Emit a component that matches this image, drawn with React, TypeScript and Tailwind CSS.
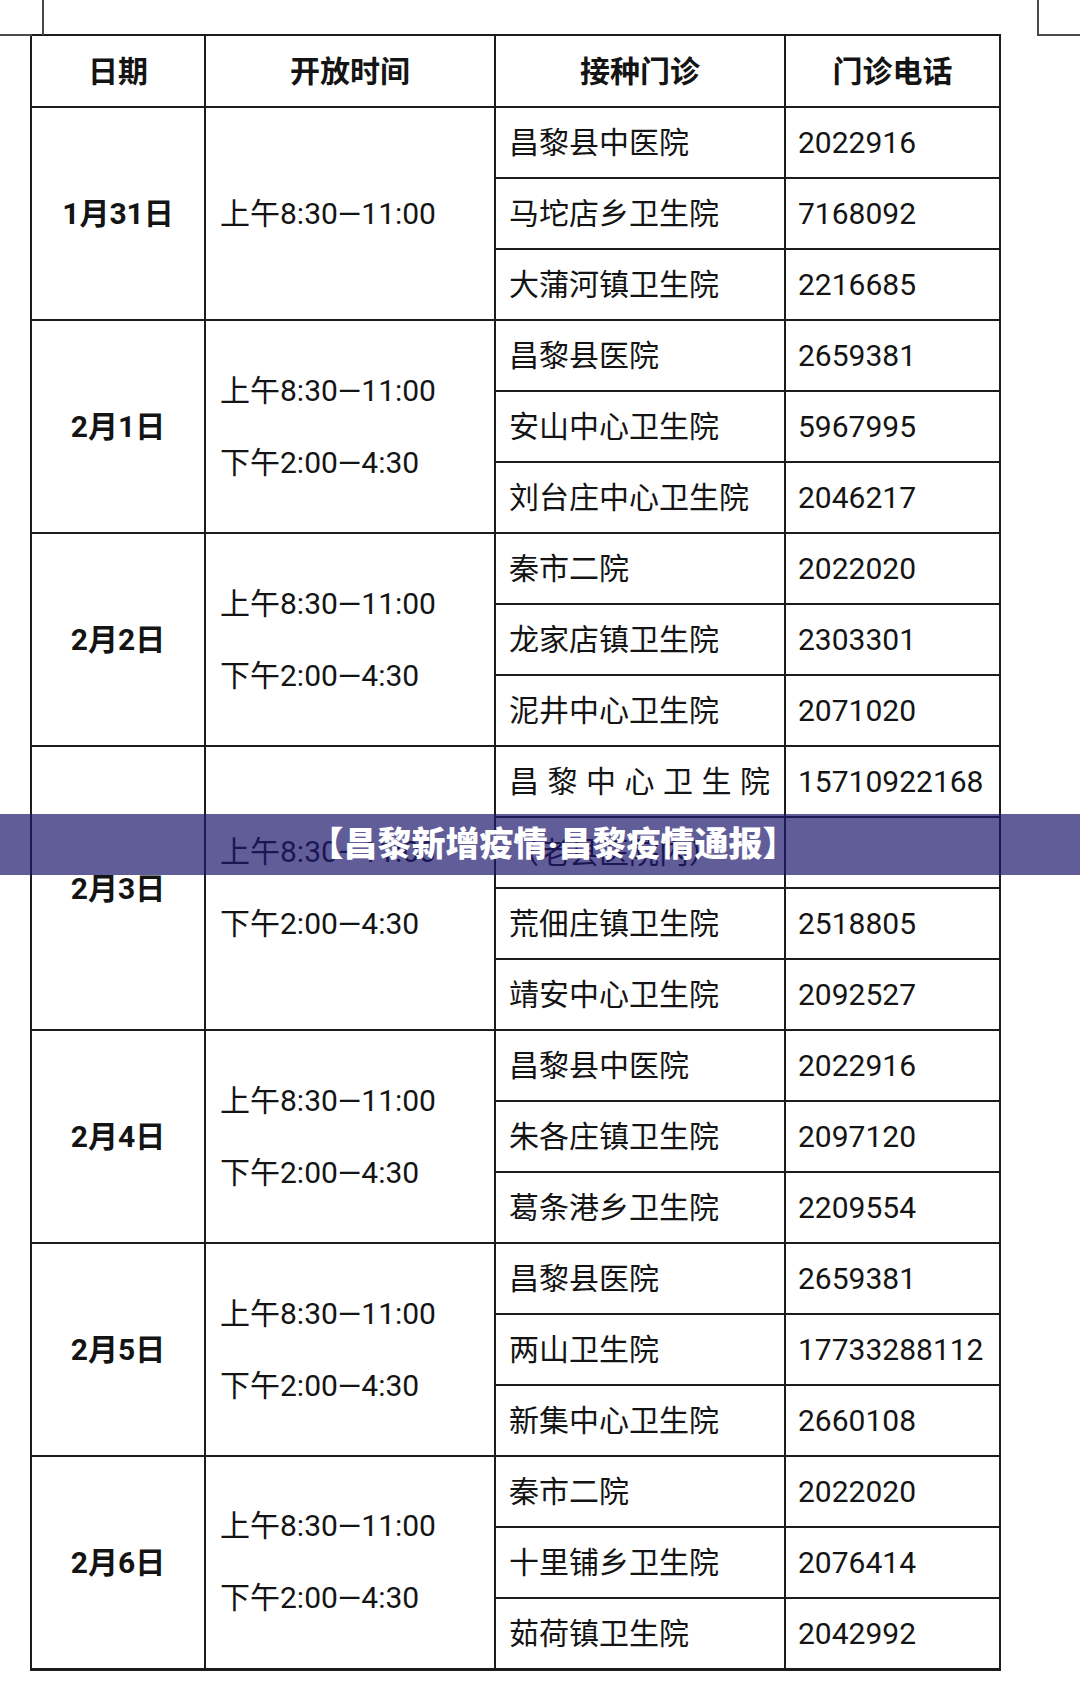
import React from "react";

type Group = {
  date: string;
  times: string[];
  rows: [string, string, boolean?][];
};

const groups: Group[] = [
  {
    date: "1月31日",
    times: ["上午8:30—11:00"],
    rows: [
      ["昌黎县中医院", "2022916"],
      ["马坨店乡卫生院", "7168092"],
      ["大蒲河镇卫生院", "2216685"],
    ],
  },
  {
    date: "2月1日",
    times: ["上午8:30—11:00", "下午2:00—4:30"],
    rows: [
      ["昌黎县医院", "2659381"],
      ["安山中心卫生院", "5967995"],
      ["刘台庄中心卫生院", "2046217"],
    ],
  },
  {
    date: "2月2日",
    times: ["上午8:30—11:00", "下午2:00—4:30"],
    rows: [
      ["秦市二院", "2022020"],
      ["龙家店镇卫生院", "2303301"],
      ["泥井中心卫生院", "2071020"],
    ],
  },
  {
    date: "2月3日",
    times: ["上午8:30—11:00", "下午2:00—4:30"],
    rows: [
      ["昌黎中心卫生院", "15710922168", true],
      ["（老县医院内）", ""],
      ["荒佃庄镇卫生院", "2518805"],
      ["靖安中心卫生院", "2092527"],
    ],
  },
  {
    date: "2月4日",
    times: ["上午8:30—11:00", "下午2:00—4:30"],
    rows: [
      ["昌黎县中医院", "2022916"],
      ["朱各庄镇卫生院", "2097120"],
      ["葛条港乡卫生院", "2209554"],
    ],
  },
  {
    date: "2月5日",
    times: ["上午8:30—11:00", "下午2:00—4:30"],
    rows: [
      ["昌黎县医院", "2659381"],
      ["两山卫生院", "17733288112"],
      ["新集中心卫生院", "2660108"],
    ],
  },
  {
    date: "2月6日",
    times: ["上午8:30—11:00", "下午2:00—4:30"],
    rows: [
      ["秦市二院", "2022020"],
      ["十里铺乡卫生院", "2076414"],
      ["茹荷镇卫生院", "2042992"],
    ],
  },
];

const cell = "border-2 border-[#1c1c1c]";

export default function App() {
  return (
    <div className="relative w-[1080px] h-[1691px] bg-white overflow-hidden font-['Roboto','Noto_Sans_CJK_SC',sans-serif] text-[#141414]">
      {/* page corner marks */}
      <div className="absolute left-[42px] top-0 w-[2px] h-[35px] bg-[#4a4a4a]" />
      <div className="absolute left-0 top-[34px] w-[32px] h-[2px] bg-[#4a4a4a]" />
      <div className="absolute left-[1037px] top-0 w-[2px] h-[36px] bg-[#4a4a4a]" />
      <div className="absolute left-[1037px] top-[34px] w-[43px] h-[2px] bg-[#4a4a4a]" />

      <div className="pt-[34px] pl-[30px]">
        <table className="table-fixed border-collapse w-[969px] border-b-[3px] border-[#1c1c1c]">
          <colgroup>
            <col className="w-[174px]" />
            <col className="w-[290px]" />
            <col className="w-[290px]" />
            <col className="w-[215px]" />
          </colgroup>
          <thead>
            <tr className="h-[72px]">
              <th className={`${cell} text-[30px] font-bold text-center`}>日期</th>
              <th className={`${cell} text-[30px] font-bold text-center`}>开放时间</th>
              <th className={`${cell} text-[30px] font-bold text-center`}>接种门诊</th>
              <th className={`${cell} text-[30px] font-bold text-center`}>门诊电话</th>
            </tr>
          </thead>
          <tbody>
            {groups.map((g) =>
              g.rows.map((r, i) => (
                <tr key={g.date + i} className="h-[71px]">
                  {i === 0 && (
                    <>
                      <td
                        rowSpan={g.rows.length}
                        className={`${cell} text-center text-[30px] font-bold align-middle`}
                      >
                        {g.date}
                      </td>
                      <td
                        rowSpan={g.rows.length}
                        className={`${cell} pl-[14px] text-[30px] align-middle`}
                      >
                        <div className="flex flex-col justify-center">
                          {g.times.map((t) => (
                            <div key={t} className="leading-[72px] whitespace-nowrap">
                              {t}
                            </div>
                          ))}
                        </div>
                      </td>
                    </>
                  )}
                  <td
                    className={`${cell} pl-[13px] text-[30px] whitespace-nowrap align-middle ${
                      r[2] ? "tracking-[8.5px]" : ""
                    }`}
                  >
                    {r[0]}
                  </td>
                  <td className={`${cell} pl-[12px] text-[30px] whitespace-nowrap align-middle`}>
                    {r[1]}
                  </td>
                </tr>
              ))
            )}
          </tbody>
        </table>
      </div>

      {/* title banner overlay */}
      <div className="absolute left-0 right-0 top-[814px] h-[61px] bg-[rgba(30,24,110,0.7)] flex items-center justify-center">
        <span className="pl-[26px] text-white text-[34px] font-black">
          【昌黎新增疫情·昌黎疫情通报】
        </span>
      </div>
    </div>
  );
}
